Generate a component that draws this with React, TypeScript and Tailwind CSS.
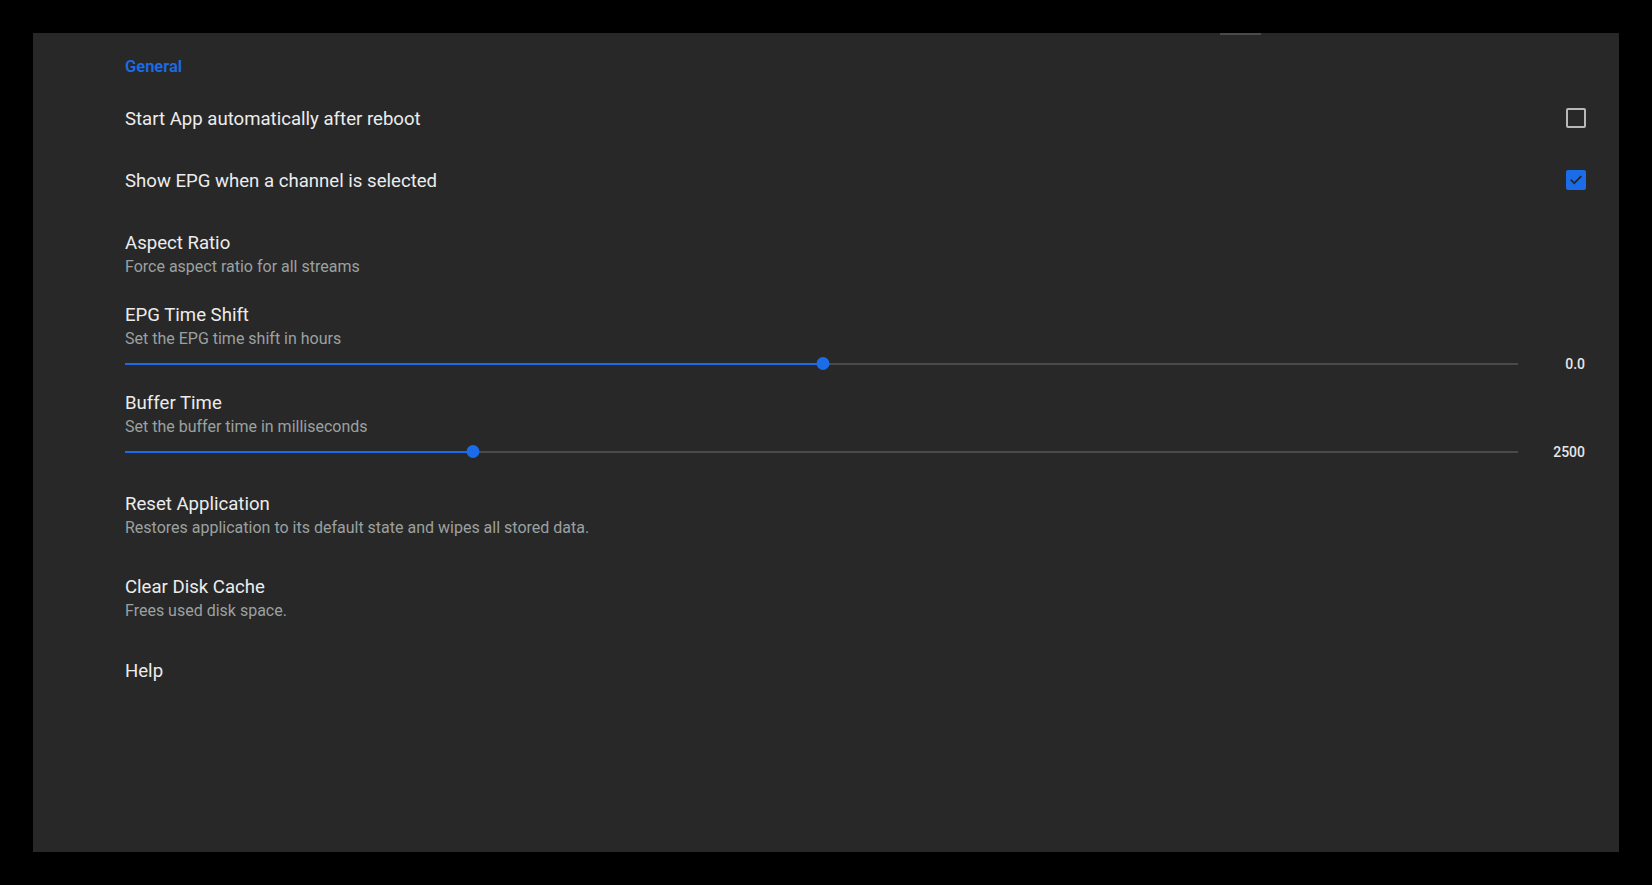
import React from "react";

function CheckBox({ checked }: { checked: boolean }) {
  if (checked) {
    return (
      <div className="w-[20px] h-[20px] -mt-[2px] -mr-[1px] rounded-[2px] bg-[#1a6ce8] flex items-center justify-center">
        <svg width="14" height="14" viewBox="0 0 24 24" fill="none">
          <path d="M4 12.5l5 5L20 6.5" stroke="#262626" strokeWidth="3" strokeLinecap="square" />
        </svg>
      </div>
    );
  }
  return <div className="w-[20px] h-[20px] -mt-[2px] -mr-[1px] rounded-[2px] border-2 border-[#b8b8b8]" />;
}

function Slider({ pct, value }: { pct: number; value: string }) {
  return (
    <div className="flex items-center h-[25px]">
      <div className="relative flex-1 h-[25px] flex items-center">
        <div className="w-full h-[2px] bg-[#4a4a4a]" />
        <div className="absolute left-0 h-[2px] bg-[#1a6ce8]" style={{ width: `${pct}%` }} />
        <div
          className="absolute w-[13px] h-[13px] rounded-full bg-[#1a6ce8] -translate-x-1/2"
          style={{ left: `${pct}%` }}
        />
      </div>
      <div className="w-[67px] text-right text-[14px] font-medium text-[#e6e6e6] leading-none">{value}</div>
    </div>
  );
}

function Title({ children }: { children: React.ReactNode }) {
  return <div className="text-[18.6px] leading-[24px] text-[#ececec]">{children}</div>;
}
function Sub({ children }: { children: React.ReactNode }) {
  return <div className="text-[16px] leading-[24px] text-[#9ba1a1]">{children}</div>;
}

export default function App() {
  return (
    <div className="w-[1652px] h-[885px] bg-black p-[33px]" style={{ fontFamily: "Roboto, 'Noto Sans', sans-serif" }}>
      <div className="relative w-full h-full bg-[#282828] pl-[92px] pr-[34px] pt-[24px]">
        <div className="absolute top-0 left-[1187px] w-[41px] h-[2px] bg-[#4a4a4a]" />
        <div className="text-[16.5px] leading-[20px] font-semibold text-[#1a6ce8]">General</div>

        <div className="mt-[11px] h-[62px] flex items-center justify-between">
          <Title>Start App automatically after reboot</Title>
          <CheckBox checked={false} />
        </div>
        <div className="h-[62px] flex items-center justify-between">
          <Title>Show EPG when a channel is selected</Title>
          <CheckBox checked={true} />
        </div>

        <div className="mt-[19px]">
          <Title>Aspect Ratio</Title>
          <Sub>Force aspect ratio for all streams</Sub>
        </div>

        <div className="mt-[24px]">
          <Title>EPG Time Shift</Title>
          <Sub>Set the EPG time shift in hours</Sub>
          <Slider pct={50.1} value="0.0" />
        </div>

        <div className="mt-[15px]">
          <Title>Buffer Time</Title>
          <Sub>Set the buffer time in milliseconds</Sub>
          <Slider pct={25} value="2500" />
        </div>

        <div className="mt-[28px]">
          <Title>Reset Application</Title>
          <Sub>Restores application to its default state and wipes all stored data.</Sub>
        </div>

        <div className="mt-[35px]">
          <Title>Clear Disk Cache</Title>
          <Sub>Frees used disk space.</Sub>
        </div>

        <div className="mt-[36px]">
          <Title>Help</Title>
        </div>
      </div>
    </div>
  );
}
